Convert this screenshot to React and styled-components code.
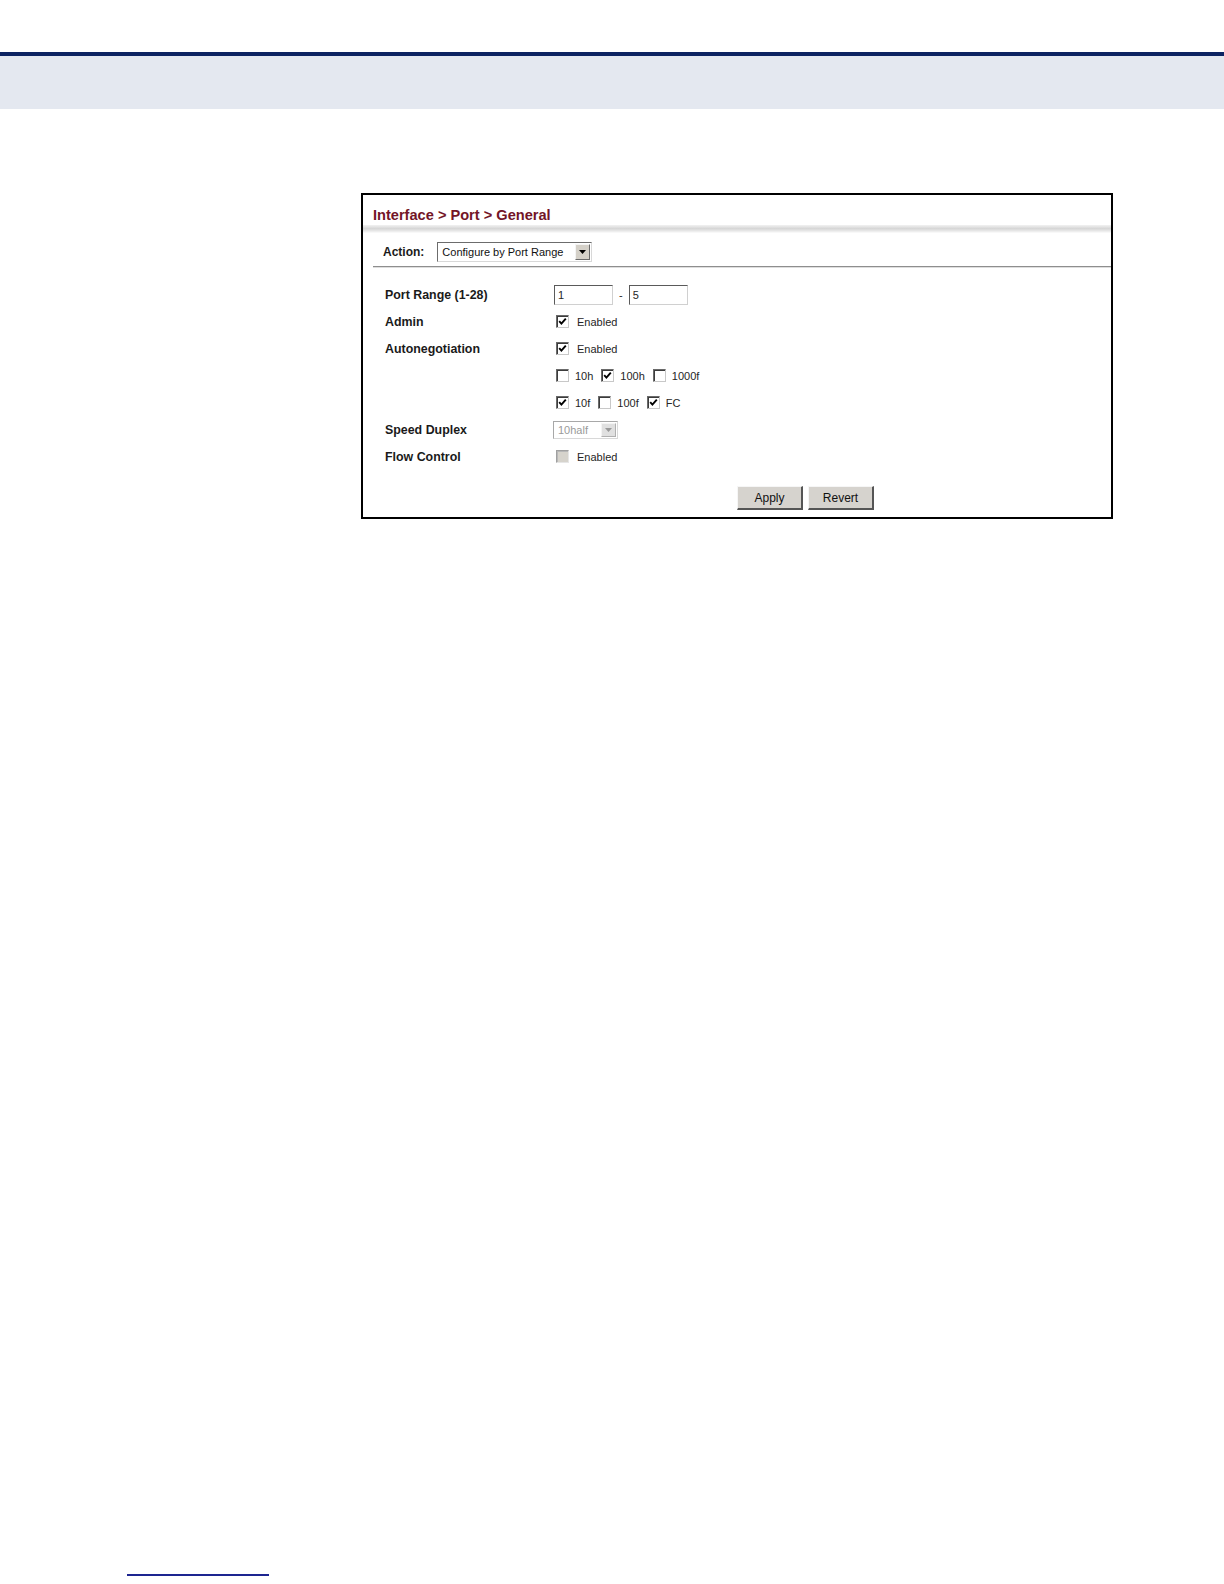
import React from "react"
import styled, { createGlobalStyle } from "styled-components"

const GlobalStyle = createGlobalStyle`
    html, body {
        margin: 0;
        padding: 0;
        background: #ffffff;
    }
    body {
        font-family: "Liberation Sans", Arial, sans-serif;
        color: #1a1a1a;
    }
`

const Page = styled.div`
    width: 1224px;
    height: 1584px;
    display: flex;
    flex-direction: column;
    overflow: hidden;
`

const TopRule = styled.div`
    margin-top: 52px;
    height: 4px;
    background: #0c2362;
`

const HeaderBand = styled.div`
    height: 53px;
    background: #e4e8f0;
`

const Panel = styled.div`
    box-sizing: border-box;
    margin: 84px 0 0 361px;
    width: 752px;
    height: 326px;
    border: 2px solid #000;
    display: flex;
    flex-direction: column;
`

const TitleBar = styled.div`
    height: 30px;
    box-sizing: border-box;
    padding: 11px 0 0 10px;
    .title{
        font-size: 14.6px;
        font-weight: 700;
        line-height: 18px;
        color: #731527;
    }
`

const TitleShadow = styled.div`
    height: 8px;
    background: linear-gradient(#f2f2f2, #d6d6d6 45%, #e9e9e9 75%, #fdfdfd);
`

const ActionRow = styled.div`
    display: flex;
    align-items: center;
    gap: 13px;
    height: 28px;
    padding: 5px 0 0 20px;
    .label{
        font-size: 12px;
        font-weight: 700;
        color: #1a1a1a;
    }
`

const Select = styled.div`
    box-sizing: border-box;
    display: flex;
    align-items: stretch;
    width: ${p => p.$width}px;
    height: ${p => p.$height}px;
    background: #fff;
    border-top: 1px solid ${p => p.$disabled ? "#a8a8a8" : "#6c6c6c"};
    border-left: 1px solid ${p => p.$disabled ? "#a8a8a8" : "#6c6c6c"};
    border-right: 1px solid #d8d8d8;
    border-bottom: 1px solid #d8d8d8;
    .text{
        flex: 1;
        font-size: 11px;
        line-height: ${p => p.$height - 2}px;
        padding-left: 4px;
        color: ${p => p.$disabled ? "#9a9a9a" : "#111"};
        white-space: nowrap;
    }
    .arrow{
        box-sizing: border-box;
        width: 15px;
        margin: 1px;
        display: flex;
        align-items: center;
        justify-content: center;
        background: ${p => p.$disabled ? "#e0e0e0" : "#d4d0c8"};
        border-top: 1px solid #f4f4f4;
        border-left: 1px solid #f4f4f4;
        border-right: 1px solid ${p => p.$disabled ? "#b0b0b0" : "#6a6a6a"};
        border-bottom: 1px solid ${p => p.$disabled ? "#b0b0b0" : "#6a6a6a"};
    }
`

const Divider = styled.div`
    margin-left: 10px;
    height: 1px;
    background: #8e8e8e;
    border-bottom: 1px solid #dedede;
`

const Form = styled.div`
    display: grid;
    grid-template-columns: 167px 1fr;
    grid-auto-rows: 27px;
    align-items: center;
    padding: 13px 0 0 22px;
    .label{
        font-size: 12.4px;
        font-weight: 700;
        color: #1a1a1a;
    }
`

const Control = styled.div`
    display: flex;
    align-items: center;
    gap: ${p => p.$gap || 8}px;
    padding-left: ${p => p.$indent || 0}px;
    font-size: 11px;
    color: #262626;
`

const TextInput = styled.div`
    box-sizing: border-box;
    width: 59px;
    height: 20px;
    background: #fff;
    border-top: 1px solid #5a5a5a;
    border-left: 1px solid #5a5a5a;
    border-right: 1px solid #d0d0d0;
    border-bottom: 1px solid #d0d0d0;
    font-size: 11px;
    line-height: 18px;
    padding-left: 3px;
`

const Option = styled.span`
    display: inline-flex;
    align-items: center;
    gap: ${p => p.$gap || 6}px;
    margin-right: 3px;
`

const Box = styled.span`
    box-sizing: border-box;
    width: 13px;
    height: 13px;
    display: inline-flex;
    align-items: center;
    justify-content: center;
    background: ${p => p.$disabled ? "#d6d3cc" : "#fff"};
    border-top: 1px solid ${p => p.$disabled ? "#a0a0a0" : "#6a6a6a"};
    border-left: 1px solid ${p => p.$disabled ? "#a0a0a0" : "#6a6a6a"};
    border-right: 1px solid ${p => p.$disabled ? "#e6e6e6" : "#c8c8c8"};
    border-bottom: 1px solid ${p => p.$disabled ? "#e6e6e6" : "#c8c8c8"};
    box-shadow: inset 1px 1px 0 ${p => p.$disabled ? "#b8b8b8" : "#3c3c3c"};
`

const ButtonRow = styled.div`
    display: flex;
    gap: 5px;
    margin: 16px 0 0 374px;
`

const Button = styled.div`
    box-sizing: border-box;
    width: 66px;
    height: 24px;
    display: flex;
    align-items: center;
    justify-content: center;
    background: #d6d3ce;
    border-top: 1px solid #f6f6f6;
    border-left: 1px solid #f6f6f6;
    border-right: 2px solid #555;
    border-bottom: 2px solid #555;
    font-size: 12px;
    color: #111;
`

const FooterRule = styled.div`
    margin: 1055px 0 0 127px;
    width: 142px;
    height: 2px;
    background: #1d2590;
`

const Check = () => (
    <svg width="9" height="9" viewBox="0 0 9 9">
        <polyline points="1.2,4.2 3.4,6.6 7.8,1.6" fill="none" stroke="#000" strokeWidth="1.9" />
    </svg>
)

const Checkbox = ({checked, disabled}) => (
    <Box $disabled={disabled}>{checked && <Check />}</Box>
)

const Arrow = ({disabled}) => (
    <svg width="7" height="4" viewBox="0 0 7 4">
        <polygon points="0,0 7,0 3.5,4" fill={disabled ? "#999" : "#000"} />
    </svg>
)

const App = () => {
    return (
        <Page>
            <GlobalStyle />
            <TopRule />
            <HeaderBand />
            <Panel>
                <TitleBar><span className="title">Interface &gt; Port &gt; General</span></TitleBar>
                <TitleShadow />
                <ActionRow>
                    <span className="label">Action:</span>
                    <Select $width={155} $height={20}>
                        <span className="text">Configure by Port Range</span>
                        <span className="arrow"><Arrow /></span>
                    </Select>
                </ActionRow>
                <Divider />
                <Form>
                    <span className="label">Port Range (1-28)</span>
                    <Control $indent={2} $gap={6}>
                        <TextInput>1</TextInput>
                        <span>-</span>
                        <TextInput>5</TextInput>
                    </Control>

                    <span className="label">Admin</span>
                    <Control $indent={4}>
                        <Option $gap={8}><Checkbox checked />Enabled</Option>
                    </Control>

                    <span className="label">Autonegotiation</span>
                    <Control $indent={4}>
                        <Option $gap={8}><Checkbox checked />Enabled</Option>
                    </Control>

                    <span />
                    <Control $indent={4} $gap={5}>
                        <Option><Checkbox />10h</Option>
                        <Option><Checkbox checked />100h</Option>
                        <Option><Checkbox />1000f</Option>
                    </Control>

                    <span />
                    <Control $indent={4} $gap={5}>
                        <Option><Checkbox checked />10f</Option>
                        <Option><Checkbox />100f</Option>
                        <Option><Checkbox checked />FC</Option>
                    </Control>

                    <span className="label">Speed Duplex</span>
                    <Control $indent={1}>
                        <Select $width={65} $height={18} $disabled>
                            <span className="text">10half</span>
                            <span className="arrow"><Arrow disabled /></span>
                        </Select>
                    </Control>

                    <span className="label">Flow Control</span>
                    <Control $indent={4}>
                        <Option $gap={8}><Checkbox disabled />Enabled</Option>
                    </Control>
                </Form>
                <ButtonRow>
                    <Button>Apply</Button>
                    <Button>Revert</Button>
                </ButtonRow>
            </Panel>
            <FooterRule />
        </Page>
    )
}

export default App
